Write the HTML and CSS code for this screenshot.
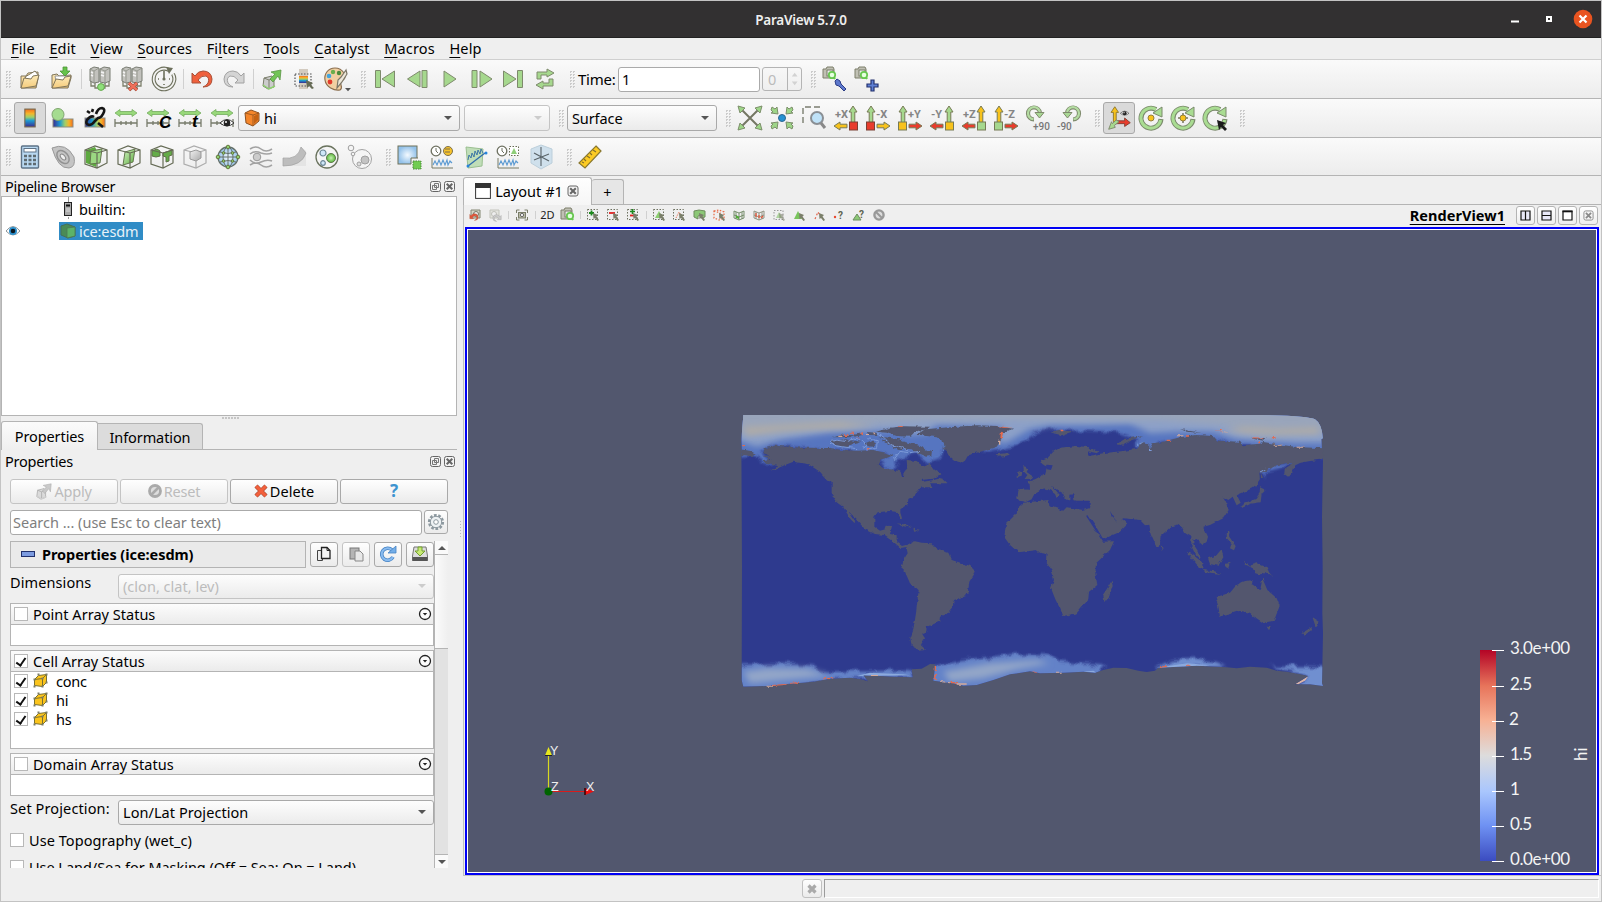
FILE: index.html
```html
<!DOCTYPE html>
<html lang="en">
<head>
<meta charset="utf-8">
<title>ParaView 5.7.0</title>
<link rel="stylesheet" href="styles.css">
</head>
<body>
<svg class="defs" width="0" height="0">
<defs>
<linearGradient id="rainbow" x1="0" y1="0" x2="0" y2="1"><stop offset="0" stop-color="#f26c1c"/><stop offset=".25" stop-color="#f5b52a"/><stop offset=".45" stop-color="#9fd06a"/><stop offset=".65" stop-color="#1c9ad0"/><stop offset="1" stop-color="#3a2a90"/></linearGradient>
<linearGradient id="rainbowH" x1="0" y1="0" x2="1" y2="0"><stop offset="0" stop-color="#3a2a90"/><stop offset=".35" stop-color="#1c9ad0"/><stop offset=".6" stop-color="#9fd06a"/><stop offset=".8" stop-color="#f5b52a"/><stop offset="1" stop-color="#f26c1c"/></linearGradient>
<linearGradient id="folder" x1="0" y1="0" x2="0" y2="1"><stop offset="0" stop-color="#fdeab8"/><stop offset="1" stop-color="#f5cc7c"/></linearGradient>
<linearGradient id="gry" x1="0" y1="0" x2="1" y2="1"><stop offset="0" stop-color="#f2f2f2"/><stop offset="1" stop-color="#a8a8a8"/></linearGradient>
<radialGradient id="sky"><stop offset="0" stop-color="#f4faff"/><stop offset="1" stop-color="#94c2ea"/></radialGradient>
<radialGradient id="grn"><stop offset="0" stop-color="#c4efb0"/><stop offset="1" stop-color="#5cb83c"/></radialGradient>
<linearGradient id="grnL" x1="0" y1="0" x2="1" y2="1"><stop offset="0" stop-color="#d4f4c4"/><stop offset="1" stop-color="#5fae42"/></linearGradient>

<g id="open"><path d="M-9 9V-3h5l2-3 10-1v7L6 9z" fill="url(#folder)" stroke="#80755a"/><path d="M-5-2 5-8l4 5-10 6z" fill="#fff" stroke="#80755a"/><path d="M-9 9-6-1 1 0 3-3 9-4 6 7-6 9z" fill="url(#folder)" stroke="#80755a"/></g>
<g id="openrecent"><path d="M-10 9V-4l5-1 2 2 12-1v3L6 9z" fill="url(#folder)" stroke="#80755a"/><path d="M-7-3H8l-2 5H-6z" fill="#fff" stroke="#999"/><path d="M-10 9-6 0 1 1 3-2 9-3 6 7-7 9z" fill="url(#folder)" stroke="#80755a"/><path d="M1-12h4v4h3L3-3-2-8h3z" fill="#66c24a" stroke="#4d9436" stroke-width=".8"/></g>
<g id="servers"><path d="M-5 4V9H1M5 4V9H0M-9 2V7h4M9 2V7H5" fill="none" stroke="#7d806c" stroke-width="1.3"/><path d="M-10-10l4-2 5 1V3l-5 1-4-2zM0-10l4-2 6 1V2L5 4 0 3z" fill="#c2c2bd" stroke="#797c73"/><path d="M-10-10l4 2 5-3M-6-8V4M0-10l5 2 5-3M5-8V4" fill="none" stroke="#8d9087" stroke-width=".8"/><path d="M-9-7l2 1M-9-4l2 1M1-7l3 1M1-4l3 1" stroke="#f4f4f4" stroke-width="1.4"/></g>
<g id="connect"><use href="#servers"/><circle cx="1" cy="8" r="3.4" fill="#8fe07a" stroke="#63a84c"/></g>
<g id="disconnect"><use href="#servers"/><path d="M-3 4 5 11M5 4-3 11" stroke="#8a4030" stroke-width="3.6"/><path d="M-3 4 5 11M5 4-3 11" stroke="#f0705a" stroke-width="2.4"/></g>
<g id="timer"><path d="M5-9A10.3 10.3 0 1 0 9-5" fill="none" stroke="#6d705c" stroke-width="4"/><path d="M5-9A10.3 10.3 0 1 0 9-5" fill="none" stroke="#f2f2f0" stroke-width="1.8"/><path d="M2-12 9-11 5-5z" fill="#6d705c"/><path d="M0-8V0M-6 0h1M0 6V5M5 0h1" stroke="#6d705c" stroke-width="1.6"/><circle r="1.6" fill="#6d705c"/></g>
<g id="undoarrow"><path d="M-10-6V4H-1L-4 1Q0-4 4-3 8-1 6 4 4 7 1 8 10 8 10 0 9-8 1-8-4-8-7-3z"/></g>
<g id="saveext"><path d="M-8-1 0-3 2 0V8l-6 2-5-3z" fill="#ccc" stroke="#7b7e6b"/><path d="M-8-1l5 2 5-2M-3 1v8" fill="none" stroke="#7b7e6b"/><path d="M-9 6-3 10 3 7" fill="none" stroke="#8ed070" stroke-width="1.5"/><path d="M-2 0 3-5-1-7 9-9 8 1 6-3 1 3z" fill="#72c456" stroke="#5a9444" stroke-width=".8"/></g>
<g id="subset"><rect x="-5" y="-10" width="9" height="20" fill="#d3cbc0"/><rect x="-5" y="-3" width="9" height="7" fill="url(#rainbow)"/><rect x="-9" y="-5" width="16" height="12" fill="none" stroke="#555" stroke-width="1.2" stroke-dasharray="1.5 1.500"/><path d="M2 1 9 4 7 6 10 9 8 10 5 7 3 9z" fill="#666b55"/></g>
<g id="palette"><path d="M-1-11C-8-11-12-5-11 1-10 8-2 12 4 11 8 8 3 6 5 2 9 1 10-2 8-6 6-9 3-11-1-11z" fill="#f2cfa2" stroke="#8b6f50" stroke-width="1.2"/><circle cx="-3" cy="-7" r="2.2" fill="#6aae4c"/><circle cx="3" cy="-6" r="2.2" fill="#4b8a3c"/><circle cx="-7" cy="-3" r="2.3" fill="#44a4dc"/><circle cx="-6" cy="3" r="2.4" fill="#e23a2c"/><path d="M10-9 5-2 2 1 1 9 6 3 11-5z" fill="#ece6d8" stroke="#7c7667" stroke-width="1.2"/><path d="M9 9h6l-3 3.2z" fill="#555"/></g>
<g id="play"><path d="M-6-8 6 0-6 8z"/></g>
<g id="loop" fill="#a6d88e" stroke="#7e8a6c"><path d="M-8 0V-7H2v-3l7 4-7 4v-2H-4v4z"/><path d="M8 0V7H-2v3L-9 6l7-4v2H4V0z"/></g>
<g id="camera"><path d="M-12-10h3l1-2h6l1 2v9h-11z" fill="#c0c0b4" stroke="#7c7e6a"/><rect x="-8" y="-9" width="6" height="6" fill="#eee" stroke="#777a66"/><circle cx="-3" cy="-4" r="3.2" fill="#e6ffe0" stroke="#68c850" stroke-width="1.8"/><path d="M-1-2 0 0" stroke="#68c850" stroke-width="2"/></g>
<g id="camedit"><use href="#camera"/><path d="M0 2l2-2 3 2 1 3 5 5-2 2-5-5-3-1z" fill="#5d78cc" stroke="#2b3c86"/></g>
<g id="camadd"><use href="#camera"/><path d="M4 1h3v4h4v3H7v4H4V8H0V5h4z" fill="#5f80d4" stroke="#23316e" stroke-width="1.2"/></g>

<g id="legend"><rect x="-5.5" y="-9.500" width="11" height="19" fill="url(#rainbow)" stroke="#76684e" stroke-width="1.2"/></g>
<g id="editmap"><rect x="-9" y="1" width="20" height="8" fill="url(#rainbowH)" stroke="#8b8e80"/><circle cx="-4" cy="-3.500" r="6" fill="#a5dc90" stroke="#7fa56e"/></g>
<g id="sepmap"><rect x="-10" y="0" width="20" height="9" fill="url(#rainbowH)" stroke="#8b8e80"/><path d="M-1-1Q-4-3-8 2-10 6-6 7-3 7 0 3M1-4Q3-10 7-10 11-9 8-4 6 0 3 0L-1 4M-8-7l3 2M-2-9l-1 3M3 5l5 4" fill="none" stroke="#151515" stroke-width="2.600"/></g>
<g id="rescale"><path d="M-11-5-6-8.500v2H6v-2L11-5 6-1.500v-2H-6v2z" fill="#98d87a" stroke="#74ac5e" stroke-width=".8"/><path d="M-11 1V9M11 1V9M-11 5H11M-5 3V7M0 3V7M5 3V7" stroke="#777b6b" stroke-width="1.300"/></g>
<g id="eyebw"><path d="M-7 0Q0-7 7 0 0 6-7 0z" fill="#fff" stroke="#333"/><circle r="3.300" fill="#222"/><circle cx="-1" cy="-1" r="1" fill="#fff"/></g>
<g id="resetcam"><path d="M-8-8 8 8M8-8-8 8" stroke="#747763" stroke-width="2"/><g fill="#9ed588" stroke="#7c8f6a"><path d="M-12-12l7 2-5 5zM12-12l-7 2 5 5zM-12 12l7-2-5-5zM12 12l-7-2 5-5z"/></g></g>
<g id="zoomdata"><g fill="#9ed588" stroke="#7c8f6a"><path d="M-4-4l-1-7-2 2-3-2-1 3 2 2-2 1zM4-4l1-7 2 2 3-2 1 3-2 2 2 1zM-4 4l-1 7-2-2-3 2-1-3 2-2-2-1zM4 4l1 7 2-2 3 2 1-3-2-2 2-1z"/></g><circle r="3.500" fill="#2592d4" stroke="#2d6690"/></g>
<g id="zoombox"><path d="M-11 5V-11H8" fill="none" stroke="#7b7e70" stroke-width="1.400" stroke-dasharray="6 3"/><circle cx="3" cy="0" r="6" fill="#bfe2f8" stroke="#8a8f94" stroke-width="2"/><path d="M7 5l4 5" stroke="#888" stroke-width="3"/></g>
<g id="aup"><path d="M-1.800 5V-6h-2.200L0-12l4 6H1.800V5z" stroke="#777a55"/></g>
<g id="aleft"><path d="M-5-1.800h-7V-4l-6 4 6 4V1.800h7z" stroke="#777a55"/></g>
<g id="aright"><path d="M5-1.800h7V-4l6 4-6 4V1.800H5z" stroke="#777a55"/></g>
<g id="rot"><path d="M0 3.500A6 6 0 1 1 6-3" fill="none" stroke="#7e8a6c" stroke-width="4.200"/><path d="M-.5 3.200A6 6 0 1 1 6-3" fill="none" stroke="#b4dca2" stroke-width="2.200"/><path d="M1-3.500H10L5.500 2z" fill="#a9d895" stroke="#7e8a6c"/></g>
<g id="ring"><path d="M10 1A10 10 0 1 1 5-8.500" fill="none" stroke="#7b8a6c" stroke-width="5"/><path d="M9.700 2A10 10 0 1 1 5-8.500" fill="none" stroke="#a9dc92" stroke-width="3"/><path d="M2-5 11-11 11-1z" fill="#a9dc92" stroke="#7b8a6c"/></g>
<g id="axes"><g fill="#f7c21c" stroke="#8c7630"><path d="M-6 4V-6h-2.500l4-6 4 6H-3V4z"/></g><path d="M-3 3H6V0l6 5-6 4V6h-9z" fill="#e83c2c" stroke="#854034"/><path d="M-3 2-7 6-8 4-11 12-4 10-5 8 0 4z" fill="#a6d88e" stroke="#7e8a6c"/></g>

<g id="calc"><rect x="-8.500" y="-11" width="17" height="22" rx="1" fill="#b9d9f2" stroke="#5e7387" stroke-width="1.400"/><rect x="-6" y="-8.500" width="12" height="3.500" fill="#fff" stroke="#5e7387"/><path d="M-6-1h3M-1.500-1h3M3-1h3M-6 3h3M-1.500 3h3M3 3h3M-6 7h3M-1.500 7h3M3 7h3" stroke="#5e6a70" stroke-width="2.500"/></g>
<g id="contour"><path d="M-11-9Q3-15 11 0 13 10 6 11-5 12-11-9z" fill="#c4c4c4" stroke="#999"/><ellipse rx="5" ry="7.500" transform="rotate(-40)" fill="none" stroke="#929292" stroke-width="1.500"/><ellipse rx="2" ry="3.500" transform="rotate(-40)" fill="#eee" stroke="#858585"/></g>
<g id="wire"><path d="M-11-7-1-11 11-7V6L1 11-11 7zM-11-7 1-4 11-7M1-4V11" fill="none" stroke-width="1.200"/></g>
<g id="clip"><path d="M-10-7-1-10 2-4 0 10-10 6z" fill="#5eaa40"/><path d="M-5-6 6-8 4 6-6 7z" fill="#9bd882" stroke="#64784e"/><use href="#wire" stroke="#656b55"/></g>
<g id="slice"><path d="M-4-5 6-8 4 5-6 8z" fill="url(#grnL)" stroke="#64784e"/><use href="#wire" stroke="#656b55"/></g>
<g id="thresh"><path d="M-10-6l5-2 3 2V-1l-4 1-4-1zM1-4l9-3v5l-3 1v5L4 5V0L1-1z" fill="#64ac48" stroke="#5e7048"/><use href="#wire" stroke="#656b55"/></g>
<g id="extract"><use href="#wire" stroke="#acacac"/><path d="M-5-5l6-2 5 2V1L1 4-5 2z" fill="url(#gry)" stroke="#999"/></g>
<g id="glyph"><circle r="10" fill="url(#sky)" stroke="#64706a" stroke-width="1.300"/><path d="M-10 0H10M0-10V10M-8-5Q0-2 8-5M-8 5Q0 2 8 5" stroke="#64706a" fill="none"/><ellipse rx="5" ry="10" fill="none" stroke="#64706a"/><g fill="#8ed070" stroke="#64783e"><circle cx="-10" r="1.800"/><circle cx="10" r="1.800"/><circle cy="-10" r="1.800"/><circle cy="10" r="1.800"/><circle cx="-4.500" cy="-4" r="1.300"/><circle cx="4.500" cy="-4" r="1.300"/><circle cx="-4.500" cy="4" r="1.300"/><circle cx="4.500" cy="4" r="1.300"/></g></g>
<g id="stream"><path d="M-11-8Q-5-12 0-8T11-8M-11-3Q-6-7 0-4 6-2 11-4M-11 3Q-6 8 0 5 6 2 11 4M-11 8Q-5 4 0 8T11 8" fill="none" stroke="#a3a3a3" stroke-width="1.600"/><circle cx="-4" r="3.800" fill="#ccc" stroke="#9a9a9a"/></g>
<g id="warp"><path d="M-11 1Q4 3 7-10L12-6V9H-11z" fill="#e4e4e4"/><path d="M-11 1Q4 3 7-10L12-4Q8 9-11 9z" fill="#bdbdbd" stroke="#a0a0a0" stroke-width=".7"/></g>
<g id="group"><circle r="11" fill="#f5f5f5" stroke="#6a735e" stroke-width="1.300"/><circle cx="4" cy="1" r="4.500" fill="url(#grn)" stroke="#5e784c"/><circle cx="-4" cy="-4" r="3" fill="#cfe7f8" stroke="#6c8797" stroke-width="1.200"/><circle cx="-4" cy="6" r="2.300" fill="#cfe7f8" stroke="#6c8797" stroke-width="1.200"/></g>
<g id="level"><circle cx="2" cy="2" r="9.500" fill="#f5f5f5" stroke="#a3a3a3"/><circle cx="5" cy="3" r="4" fill="#c4c4c4" stroke="#a0a0a0"/><circle cx="-1" cy="7" r="2" fill="#ddd" stroke="#a0a0a0"/><circle cx="-9" cy="-9" r="2.800" fill="#f4f4f4" stroke="#a0a0a0"/><circle cx="-7" cy="-3" r="1.800" fill="#f4f4f4" stroke="#a0a0a0"/></g>
<g id="selection"><rect x="-11" y="-11" width="19" height="18" fill="url(#sky)" stroke="#6e7058"/><rect x="2" y="1" width="11" height="11" fill="#f2f2f2"/><path d="M2 7V1h7" fill="none" stroke="#6e7058"/><rect x="4" y="4" width="8" height="8" fill="#72cc52" stroke="#4b883a" stroke-dasharray="1.500 1"/></g>
<g id="wave"><path d="M-10 1V11H11" fill="none" stroke="#777a66"/><path d="M-9 8l2-4 2 4 2-5 2 5 2-5 2 5 2-5 1 5 2-4 2 2" fill="none" stroke="#5b9ad2" stroke-width="1.100"/></g>
<g id="clock"><circle cx="-6" cy="-6" r="4.800" fill="#fff" stroke="#6d7060" stroke-width="1.300"/><path d="M-6-9v3l2 2" stroke="#6d7060" fill="none"/></g>
<g id="plottime"><use href="#wave"/><use href="#clock"/><circle cx="6" cy="-6" r="4.500" fill="#f8c32a" stroke="#7d714e"/><path d="M3-8h5M3-5h5" stroke="#7d714e"/></g>
<g id="plotline"><path d="M-9-10 8-8 7 9l-14 2z" fill="#c0deb8" stroke="#9abf90"/><path d="M-7 9 10-4" stroke="#2f6cac" stroke-width="1.300"/><path d="M-7 3l1-5 2 3 1-5 2 4 1-6 2 4 1-5 2 4 1-5 2 4" fill="none" stroke="#3e77a6"/><circle cx="-7" cy="9" r="1.500" fill="#2684dc"/><circle cx="11" cy="-4" r="1.500" fill="#2684dc"/></g>
<g id="plotsel"><use href="#wave"/><use href="#clock"/><rect x="1.500" y="-10.500" width="9" height="9" fill="#fff" stroke="#686b55" stroke-dasharray="1.500 1.500"/><path d="M3-3 6-9 9-3z" fill="#8fce78"/></g>
<g id="probe"><path d="M-10-8 0-12 11-8V6L0 12-10 6z" fill="#cfe0ec" stroke="#bccfdb"/><path d="M0-10V9M-7-4 8 4M8-3-7 3" stroke="#596368" stroke-width="1.100"/></g>
<g id="ruler"><path d="M6-11l5 5L-5 11l-6-5z" fill="#fccb24" stroke="#8a782f" stroke-width="1.200"/><path d="M3-7l3 2M0-4l2 2M-3-1l3 2M-6 2l2 2M-8 5l2 1" stroke="#84702a" stroke-width="1.100"/></g>

<g id="vcube"><path d="M-6-1-2-5 6-6V2L2 6-6 5z" fill="#fbc41c" stroke="#7b702e"/><path d="M-6-1 2-2 6-6M2-2V6" fill="none" stroke="#7b702e"/><path d="M-7-2h2v2h-2zM-3-7h2v2h-2zM5-7h2v2H5zM1-3h2v2H1zM-7 5h2v2h-2zM1 5h2v2H1zM5 1h2v2H5z" fill="#7b7d66"/></g>
<g id="float"><rect x="-5" y="-5" width="10" height="10" rx="2" fill="#f3f3f3" stroke="#666"/><path d="M-1-3h4v4h-4zM-3-1h4v4h-4z" fill="#eee" stroke="#777"/></g>
<g id="xbox"><rect x="-5" y="-5" width="10" height="10" rx="2" fill="#f3f3f3" stroke="#666"/><path d="M-2.800-2.800 2.800 2.800M2.800-2.800-2.800 2.800" stroke="#666" stroke-width="2"/></g>
<g id="drop"><circle r="5.500" fill="#fcfcfc" stroke="#222" stroke-width="1.300"/><path d="M-2.200-1h4.400L0 1.600z" fill="#222"/></g>
<g id="ptr"><path d="M0-2 5 0 3.500 1.500 6 5 4.500 6 2 3 .500 4z" fill="#7b7f6a"/></g>
<g id="dots"><rect x="-5.500" y="-5.500" width="10" height="10" fill="none" stroke="#6c705f" stroke-dasharray="1.500 1.500"/></g>
<g id="minicam"><path d="M-4-5h9V3H-4z" fill="#d4d5c8" stroke="#828571"/><circle cx="1" cy="-1" r="2.500" fill="#eee" stroke="#777a66"/></g>
<g id="mesh"><path d="M-5-4 0-2 5-4V3L0 5-5 3zM-5 0l5 2 5-2M0-2v7M-3-3v7M3-3v7" fill="none" stroke-width=".9"/></g>
</defs>
</svg>

<div class="window">
<header class="titlebar"><span></span><span class="title">ParaView 5.7.0</span>
<svg class="wm" viewBox="0 0 90 36"><path d="M0 20.500h8" stroke="#fff" stroke-width="2"/><rect x="36" y="16" width="4" height="4" fill="none" stroke="#fff" stroke-width="2"/><circle cx="72" cy="18" r="9.300" fill="#e95420"/><path d="M68.500 14.500l7 7m0-7l-7 7" stroke="#fff" stroke-width="2.200"/></svg></header>
<nav class="menubar"><span><u>F</u>ile</span><span><u>E</u>dit</span><span><u>V</u>iew</span><span><u>S</u>ources</span><span>Fi<u>l</u>ters</span><span><u>T</u>ools</span><span><u>C</u>atalyst</span><span><u>M</u>acros</span><span><u>H</u>elp</span></nav>

<div class="toolbar t1">
<i class="handle first"></i>
<svg class="i" viewBox="-16 -16 32 32"><use href="#open"/></svg>
<svg class="i" viewBox="-16 -16 32 32"><use href="#openrecent"/></svg><i class="sep"></i>
<svg class="i" viewBox="-16 -16 32 32"><use href="#connect"/></svg>
<svg class="i" viewBox="-16 -16 32 32"><use href="#disconnect"/></svg>
<svg class="i" viewBox="-16 -16 32 32"><use href="#timer"/></svg><i class="sep"></i>
<svg class="i" viewBox="-16 -16 32 32"><use href="#undoarrow" fill="#f0603c" stroke="#a85038"/></svg>
<svg class="i" viewBox="-16 -16 32 32"><use href="#undoarrow" transform="scale(-1 1)" fill="#d4d4d4" stroke="#a2a2a2"/></svg><i class="sep"></i>
<svg class="i" viewBox="-16 -16 32 32"><use href="#saveext"/></svg>
<svg class="i" viewBox="-16 -16 32 32"><use href="#subset"/></svg>
<svg class="i" viewBox="-16 -16 32 32"><use href="#palette"/></svg>
<i class="handle"></i>
<svg class="i" viewBox="-16 -16 32 32"><g fill="#a6d88e" stroke="#7e8a6c"><path d="M-9.500-8.500h5v17h-5zM9.500-8-3 0 9.500 8z"/></g></svg>
<svg class="i" viewBox="-16 -16 32 32"><g fill="#a6d88e" stroke="#7e8a6c"><path d="M5-8.500h5v17H5zM3-8-9.500 0 3 8z"/></g></svg>
<svg class="i" viewBox="-17 -16 32 32"><use href="#play" fill="#a6d88e" stroke="#7e8a6c"/></svg>
<svg class="i" viewBox="-17 -16 32 32"><g fill="#a6d88e" stroke="#7e8a6c"><path d="M-10-8.500h5v17h-5zM-2-8 10 0-2 8z"/></g></svg>
<svg class="i" viewBox="-16 -16 32 32"><g fill="#a6d88e" stroke="#7e8a6c"><path d="M4.500-8.500h5v17h-5zM-9.500-8 3 0-9.500 8z"/></g></svg>
<svg class="i" viewBox="-16 -16 32 32"><use href="#loop"/></svg>
<i class="handle"></i>
<span class="timelabel">Time:</span><div class="field time">1</div><div class="spin"><span>0</span><svg viewBox="0 0 14 23"><path d="M4 9l3-4 3 4zM4 14l3 4 3-4z" fill="#d2d2d2"/></svg></div>
<i class="handle"></i>
<svg class="i" viewBox="-16 -16 32 32"><use href="#camedit"/></svg>
<svg class="i" viewBox="-16 -16 32 32"><use href="#camadd"/></svg>
</div>

<div class="toolbar t2">
<i class="handle first"></i>
<svg class="i on" viewBox="-16 -16 32 32"><use href="#legend"/></svg>
<svg class="i" viewBox="-16 -16 32 32"><use href="#editmap"/></svg>
<svg class="i" viewBox="-17 -16 32 32"><use href="#sepmap"/></svg>
<svg class="i" viewBox="-16 -16 32 32"><use href="#rescale"/></svg>
<svg class="i" viewBox="-16 -16 32 32"><use href="#rescale"/><text class="mark" x="1" y="10">C</text></svg>
<svg class="i" viewBox="-16 -16 32 32"><use href="#rescale"/><text class="mark" x="2" y="9">t</text></svg>
<svg class="i" viewBox="-16 -16 32 32"><use href="#rescale"/><use href="#eyebw" x="5" y="5"/></svg>
<div class="combo c1"><svg width="16" height="18" viewBox="0 0 16 18"><path d="M1 4 7 1l8 3v8l-6 5-7-3z" fill="#f5862a" stroke="#8b5020"/><path d="M1 4l8 2 6-2M9 6v11" fill="none" stroke="#a35c20"/><path d="M10 7l4-2v6l-4 4z" fill="#c56212"/></svg><span>hi</span><b class="arr"></b></div>
<div class="combo c2 dis"><b class="arr"></b></div>
<i class="handle"></i>
<div class="combo c3"><span>Surface</span><b class="arr"></b></div>
<i class="handle"></i>
<svg class="i" viewBox="-16 -16 32 32"><use href="#resetcam"/></svg>
<svg class="i" viewBox="-16 -16 32 32"><use href="#zoomdata"/></svg>
<svg class="i" viewBox="-16 -16 32 32"><use href="#zoombox"/></svg>
<svg class="i" viewBox="-16 -16 32 32"><use href="#aup" x="7" fill="#a6d88e"/><use href="#aleft" x="6" y="8" fill="#f7c21c"/><rect x="3.500" y="4" width="8" height="8" fill="#e83c2c" stroke="#7a4034"/><text class="ax" x="-11" y="0">+X</text></svg>
<svg class="i" viewBox="-16 -16 32 32"><use href="#aup" x="-7" fill="#a6d88e"/><use href="#aright" x="-6" y="8" fill="#f7c21c"/><rect x="-11.500" y="4" width="8" height="8" fill="#e83c2c" stroke="#7a4034"/><text class="ax" x="-2" y="0">-X</text></svg>
<svg class="i" viewBox="-16 -16 32 32"><use href="#aup" x="-7" fill="#a6d88e"/><use href="#aright" x="-6" y="8" fill="#e83c2c"/><rect x="-11.500" y="4" width="8" height="8" fill="#f7c21c" stroke="#777a55"/><text class="ax" x="-2" y="0">+Y</text></svg>
<svg class="i" viewBox="-16 -16 32 32"><use href="#aup" x="7" fill="#a6d88e"/><use href="#aleft" x="6" y="8" fill="#e83c2c"/><rect x="3.500" y="4" width="8" height="8" fill="#f7c21c" stroke="#777a55"/><text class="ax" x="-11" y="0">-Y</text></svg>
<svg class="i" viewBox="-16 -16 32 32"><use href="#aup" x="7" fill="#f7c21c"/><use href="#aleft" x="6" y="8" fill="#e83c2c"/><rect x="3.500" y="4" width="8" height="8" fill="#a6d88e" stroke="#777a55"/><text class="ax" x="-11" y="0">+Z</text></svg>
<svg class="i" viewBox="-16 -16 32 32"><use href="#aup" x="-7" fill="#f7c21c"/><use href="#aright" x="-6" y="8" fill="#e83c2c"/><rect x="-11.500" y="4" width="8" height="8" fill="#a6d88e" stroke="#777a55"/><text class="ax" x="-2" y="0">-Z</text></svg>
<svg class="i" viewBox="-16 -16 32 32"><use href="#rot" x="-4" y="-2"/><text class="deg" x="-5" y="12">+90</text></svg>
<svg class="i" viewBox="-16 -16 32 32"><use href="#rot" transform="translate(3 -2) scale(-1 1)"/><text class="deg" x="-13" y="12">-90</text></svg>
<i class="handle"></i>
<svg class="i on" viewBox="-16 -16 32 32"><use href="#axes"/><use href="#eyebw" transform="translate(6 -5) scale(.65)"/></svg>
<svg class="i" viewBox="-16 -16 32 32"><use href="#ring"/><circle r="3" fill="#f8c21c" stroke="#93803c"/></svg>
<svg class="i" viewBox="-16 -16 32 32"><use href="#ring"/><path d="M-5 0H5M0-5V5" stroke="#747763" stroke-width="1.500"/><circle r="3" fill="#f8c21c" stroke="#93803c"/></svg>
<svg class="i" viewBox="-16 -16 32 32"><use href="#ring"/><path d="M2 2l9 3-3 2 4 4-2 2-4-4-2 3z" fill="#1b1b1b"/></svg>
<i class="handle"></i>
</div>

<div class="toolbar t3">
<i class="handle first"></i>
<svg class="i w" viewBox="-16 -16 33 32"><use href="#calc"/></svg>
<svg class="i w" viewBox="-16 -16 33 32"><use href="#contour"/></svg>
<svg class="i w" viewBox="-16 -16 33 32"><use href="#clip"/></svg>
<svg class="i w" viewBox="-16 -16 33 32"><use href="#slice"/></svg>
<svg class="i w" viewBox="-16 -16 33 32"><use href="#thresh"/></svg>
<svg class="i w" viewBox="-16 -16 33 32"><use href="#extract"/></svg>
<svg class="i w" viewBox="-16 -16 33 32"><use href="#glyph"/></svg>
<svg class="i w" viewBox="-16 -16 33 32"><use href="#stream"/></svg>
<svg class="i w" viewBox="-16 -16 33 32"><use href="#warp"/></svg>
<svg class="i w" viewBox="-16 -16 33 32"><use href="#group"/></svg>
<svg class="i w" viewBox="-16 -16 33 32"><use href="#level"/></svg>
<i class="handle h3"></i>
<svg class="i w" viewBox="-16 -16 33 32"><use href="#selection"/></svg>
<svg class="i w" viewBox="-16 -16 33 32"><use href="#plottime"/></svg>
<svg class="i w" viewBox="-16 -16 33 32"><use href="#plotline"/></svg>
<svg class="i w" viewBox="-16 -16 33 32"><use href="#plotsel"/></svg>
<svg class="i w" viewBox="-16 -16 33 32"><use href="#probe"/></svg>
<i class="handle h3"></i>
<svg class="i w" viewBox="-16 -16 33 32"><use href="#ruler"/></svg>
</div>

<main class="main">
<aside class="left">
<div class="dock"><span>Pipeline Browser</span><svg width="26" height="14" viewBox="0 0 26 14"><use href="#float" x="6.500" y="7.500"/><use href="#xbox" x="20.500" y="7.500"/></svg></div>
<div class="tree">
<div class="trow"><svg class="teye" viewBox="0 0 16 12"></svg><div class="node"><svg width="16" height="22" viewBox="0 0 16 22"><path d="M8.500 0v5" stroke="#999"/><rect x="4.500" y="5.500" width="7" height="13" fill="#aaa" stroke="#222"/><path d="M6 8.500h4" stroke="#111" stroke-width="2"/><path d="M6 12h4M6 14h4" stroke="#ddd"/><path d="M8.500 20v2" stroke="#999"/></svg><span>builtin:</span></div></div>
<div class="trow"><svg class="teye" viewBox="0 0 16 12"><path d="M1 6Q8-3 15 6 8 14 1 6z" fill="#fff" stroke="#8c9599"/><circle cx="8" cy="6" r="4" fill="#2c8fcc"/><circle cx="8" cy="6" r="2.300" fill="#0b1720"/></svg><div class="node sel"><svg width="16" height="16" viewBox="0 0 16 16"><path d="M1 3 7 1l8 3v9l-7 2-7-3z" fill="#4a8b56" stroke="#46705a"/><path d="M7 5l8-1v9l-8 2z" fill="#5cb368" stroke="#4c7a54" stroke-width=".8"/></svg><span>ice:esdm</span></div></div>
</div>
<div class="hsplit"></div>
<div class="tabs"><div class="tab act">Properties</div><div class="tab">Information</div></div>
<div class="dock d2"><span>Properties</span><svg width="26" height="14" viewBox="0 0 26 14"><use href="#float" x="6.500" y="7.500"/><use href="#xbox" x="20.500" y="7.500"/></svg></div>
<div class="btns">
<div class="btn dis"><svg width="16" height="18" viewBox="-10 -10 20 20" class="gray"><use href="#saveext"/></svg>Apply</div>
<div class="btn dis"><svg width="14" height="14" viewBox="1 1 14 14"><circle cx="8" cy="8" r="5.500" fill="#ddd" stroke="#aaa" stroke-width="2.800"/><path d="M12 4l-8 8" stroke="#aaa" stroke-width="2.500"/></svg>Reset</div>
<div class="btn del"><svg width="14" height="14" viewBox="0 0 14 14"><path d="M2 2l10 10M12 2L2 12" stroke="#a84a34" stroke-width="4.400"/><path d="M2.200 2.200l9.600 9.600M11.800 2.200l-9.600 9.600" stroke="#f2603c" stroke-width="3.200"/></svg>Delete</div>
<div class="btn help">?</div>
</div>
<div class="search"><div class="field">Search ... (use Esc to clear text)</div><div class="btn gear"><svg width="18" height="18" viewBox="-9 -9 18 18"><circle r="6.700" fill="none" stroke="#8c989f" stroke-width="2.800" stroke-dasharray="2.600 1.600"/><circle r="5.700" fill="#eef2f4" stroke="#8c989f"/><circle r="2.300" fill="#fff" stroke="#8c989f"/></svg></div></div>
<div class="scroll">
<div class="props">
<div class="ghead"><div class="gtitle"><i class="minus"></i>Properties (ice:esdm)</div>
<div class="btn sq"><svg width="18" height="18" viewBox="0 0 18 18"><path d="M2.500 5.500h5v10h-5z" fill="#eee" stroke="#444"/><path d="M6.500 2.500H12l3 3v8H6.500z" fill="#f2f2f2" stroke="#222" stroke-width="1.300"/><path d="M12 2.500v3h3" fill="none" stroke="#222"/></svg></div>
<div class="btn sq off"><svg width="18" height="18" viewBox="0 0 18 18"><rect x="3" y="3" width="9" height="11" fill="#b5b5b5" stroke="#777"/><path d="M8 6h5l3 3v7H8z" fill="#e8e8e8" stroke="#888"/></svg></div>
<div class="btn sq"><svg width="18" height="18" viewBox="0 0 18 18"><path d="M14 12A6 6 0 1 1 13 5" fill="none" stroke="#4583c4" stroke-width="3.600"/><path d="M14 12A6 6 0 1 1 13 5" fill="none" stroke="#8abcf0" stroke-width="2"/><path d="M9 8h8V1z" fill="#74aee8" stroke="#4583c4" stroke-width=".8"/></svg></div>
<div class="btn sq"><svg width="18" height="18" viewBox="0 0 18 18"><path d="M1.500 11 3 2h12l1.500 9v4.500h-15z" fill="#ddd" stroke="#777"/><rect x="1.500" y="12" width="15" height="4" fill="#555"/><path d="M7 2h4v4h3l-5 5-5-5h3z" fill="#c8ea74" stroke="#72a030"/></svg></div></div>
<div class="row dim"><span class="lab">Dimensions</span><div class="combo dis"><span>(clon, clat, lev)</span><b class="arr"></b></div></div>
<section class="box"><div class="bh"><i class="cb"></i><span>Point Array Status</span><svg width="14" height="14" viewBox="-7 -7 14 14"><use href="#drop"/></svg></div><div class="bb"></div></section>
<section class="box cell"><div class="bh"><i class="cb ck"></i><span>Cell Array Status</span><svg width="14" height="14" viewBox="-7 -7 14 14"><use href="#drop"/></svg></div><div class="bb">
<div class="item"><i class="cb ck"></i><svg width="15" height="15" viewBox="-7.500 -7.500 15 15"><use href="#vcube"/></svg><span>conc</span></div>
<div class="item"><i class="cb ck"></i><svg width="15" height="15" viewBox="-7.500 -7.500 15 15"><use href="#vcube"/></svg><span>hi</span></div>
<div class="item"><i class="cb ck"></i><svg width="15" height="15" viewBox="-7.500 -7.500 15 15"><use href="#vcube"/></svg><span>hs</span></div></div></section>
<section class="box"><div class="bh"><i class="cb"></i><span>Domain Array Status</span><svg width="14" height="14" viewBox="-7 -7 14 14"><use href="#drop"/></svg></div><div class="bb"></div></section>
<div class="row proj"><span class="lab">Set Projection:</span><div class="combo"><span>Lon/Lat Projection</span><b class="arr"></b></div></div>
<div class="check"><i class="cb"></i><span>Use Topography (wet_c)</span></div>
<div class="check"><i class="cb"></i><span>Use Land/Sea for Masking (Off = Sea; On = Land)</span></div>
</div>
<div class="sbar"><div class="sb"><b class="arr up"></b></div><div class="thumb"></div><div class="trough"></div><div class="sb"><b class="arr"></b></div></div>
</div>
</aside>
<div class="vsplit"><i></i></div>
<section class="right">
<div class="ltabs"><div class="ltab act"><svg width="16" height="16" viewBox="0 0 16 16"><rect x=".600" y=".600" width="14.800" height="14.800" fill="#fff" stroke="#333"/><rect width="16" height="5" fill="#333"/></svg><span>Layout #1</span><svg width="12" height="12" viewBox="-6 -6 12 12"><use href="#xbox"/></svg></div><div class="ltab plus">+</div></div>
<div class="frame">
<div class="vbar">
<svg class="s" viewBox="-10 -10 20 20"><use href="#minicam"/><use href="#undoarrow" transform="translate(-1 2) scale(.42)" fill="#e2543a" stroke="#b0583c"/></svg>
<svg class="s" viewBox="-10 -10 20 20"><g opacity=".4"><use href="#minicam" transform="scale(-1 1)"/></g><use href="#undoarrow" transform="translate(2 3) scale(-.42 .42)" fill="#ccc" stroke="#a0a0a0"/></svg><i class="vs"></i>
<svg class="s" viewBox="-10 -10 20 20"><path d="M-5.500-2v-3h3M5.500-2v-3h-3M-5.500 2v3h3M5.500 2v3h-3" fill="none" stroke="#7b7e6a"/><rect x="-3.500" y="-2.500" width="7" height="5.500" fill="#b9bba7" stroke="#7b7e6a"/><circle r="1.600" fill="#fff" stroke="#666"/></svg><i class="vs"></i>
<span class="twod">2D</span>
<svg class="s" viewBox="-10 -10 20 20"><use href="#camera" transform="translate(6 5)"/></svg><i class="vs v3"></i>
<svg class="s" viewBox="-10 -10 20 20"><use href="#dots"/><path d="M-4-2h5M-1.500-4.500v5" stroke="#1d8a1d" stroke-width="1.800"/><use href="#ptr"/></svg>
<svg class="s" viewBox="-10 -10 20 20"><use href="#dots"/><path d="M-4-2h6" stroke="#e02020" stroke-width="1.800"/><use href="#ptr"/></svg>
<svg class="s" viewBox="-10 -10 20 20"><use href="#dots"/><path d="M-3-3.500h5M-.500-6v5" stroke="#1d8a1d" stroke-width="1.600"/><path d="M-3 .500h5" stroke="#e02020" stroke-width="1.800"/><use href="#ptr"/></svg><i class="vs v4"></i>
<svg class="s" viewBox="-10 -10 20 20"><use href="#dots"/><path d="M-4 3 0-4 4 3z" fill="#8ccf70"/><use href="#ptr"/></svg>
<svg class="s" viewBox="-10 -10 20 20"><use href="#dots"/><path d="M-3 3 0-3 3 2" fill="none" stroke="#e88064" stroke-dasharray="1.500 1"/><use href="#ptr"/></svg>
<svg class="s" viewBox="-10 -10 20 20"><path d="M-5-4l5-1 6 1V2L2 3V0l-3 1v3l-4-2z" fill="#8cc876" stroke="#6f8d5c"/><use href="#ptr"/></svg>
<svg class="s" viewBox="-10 -10 20 20"><path d="M-5-4 0-5 5-3V3L0 5-5 3zM-5-4 1-2V4" fill="none" stroke="#e8714e" stroke-dasharray="1.500 1.500" stroke-width="1.300"/><use href="#ptr"/></svg>
<svg class="s" viewBox="-10 -10 20 20"><use href="#mesh" stroke="#6c8460"/><path d="M-3 0l3 2v2l-3-1z" fill="#50ac38"/></svg>
<svg class="s" viewBox="-10 -10 20 20"><use href="#mesh" stroke="#888b78"/><path d="M-3-2v4M0 0v3M2 3l2-2" stroke="#e8583e" stroke-width="1.300"/></svg>
<svg class="s" viewBox="-10 -10 20 20"><rect x="-5" y="-4.500" width="9" height="9" fill="none" stroke="#999" stroke-dasharray="1.500 1.500"/><path d="M-3 3 0-3 3 3z" fill="#aed39f"/><use href="#ptr" opacity=".6"/></svg>
<svg class="s" viewBox="-10 -10 20 20"><path d="M-5 4-1-4 3 4z" fill="#79c45c"/><use href="#ptr"/></svg>
<svg class="s" viewBox="-10 -10 20 20"><path d="M-4 4-1-3 3 4" fill="none" stroke="#e0664e" stroke-dasharray="2 2" stroke-width="1.200"/><use href="#ptr"/></svg>
<svg class="s" viewBox="-10 -10 20 20"><circle cx="-4" cy="2" r="1.200" fill="#e8482e"/><text x="-1" y="4" class="q">?</text></svg>
<svg class="s" viewBox="-10 -10 20 20"><path d="M-6 5-2-1 2 5z" fill="#8cc976" stroke="#6e8c60"/><text x="0" y="3" class="q">?</text></svg>
<svg class="s" viewBox="-10 -10 20 20"><circle r="4.600" fill="#ddd" stroke="#999" stroke-width="2.400"/><path d="M-3.500-3.500l7 7" stroke="#999" stroke-width="2"/></svg>
<span class="rv">RenderView1</span>
<div class="vb"><svg width="11" height="11" viewBox="0 0 11 11"><path d="M1 1h9v9H1zM5.500 1v9" fill="#e8e8f8" stroke="#111" stroke-width="1.200"/></svg></div>
<div class="vb"><svg width="11" height="11" viewBox="0 0 11 11"><path d="M1 1h9v9H1zM1 5.500h9" fill="#e8e8f8" stroke="#111" stroke-width="1.200"/></svg></div>
<div class="vb"><svg width="11" height="11" viewBox="0 0 11 11"><path d="M1 1h9v9H1z" fill="#fff" stroke="#111" stroke-width="1.200"/><path d="M.500 1.500h10" stroke="#111" stroke-width="1.600"/></svg></div>
<div class="vb"><svg width="11" height="11" viewBox="-6 -6 12 12" opacity=".75"><use href="#xbox"/></svg></div>
</div>
<div class="canvas">
<svg class="scene" viewBox="468 230 1128 642">
<defs>
<clipPath id="ocean"><path id="oceanp" d="M40 45H1590Q1735 47 1755 58 1775 70 1779 115L1774 118 1776 145 1779 180 1776 350 1778 500 1777 640 1779 700 1776 850 1779 858 1740 853 1695 853 1735 828 1712 823 1670 815 1640 812 1610 803 1560 800 1520 805 1490 802 1400 797 1330 801 1285 803 1275 812 1250 816 1225 812 1190 804 1150 803 1120 810 1095 818 1060 815 1000 818 930 820 900 814 840 823 790 840 740 855 700 857 670 850 610 842 616 793 600 792 575 806 545 808 548 832 500 830 400 826 414 844 390 837 360 833 300 836 250 845 180 851 110 858 40 860 35 840 36 500 34 120z"/></clipPath>
<filter id="b8" x="-20%" y="-50%" width="140%" height="200%"><feGaussianBlur stdDeviation="9"/></filter>
<filter id="b4" x="-20%" y="-50%" width="140%" height="200%"><feTurbulence type="fractalNoise" baseFrequency=".03" numOctaves="2" seed="4" result="n"/><feGaussianBlur in="SourceGraphic" stdDeviation="4"/><feDisplacementMap in2="n" scale="26" xChannelSelector="R" yChannelSelector="G"/></filter>
<filter id="coast" x="-5%" y="-5%" width="110%" height="110%"><feTurbulence type="fractalNoise" baseFrequency=".07" numOctaves="2" seed="7" result="n"/><feDisplacementMap in="SourceGraphic" in2="n" scale="11" xChannelSelector="R" yChannelSelector="G"/></filter>
<linearGradient id="cw" x1="0" y1="0" x2="0" y2="1"><stop offset="0" stop-color="#b40426"/><stop offset=".17" stop-color="#e7745b"/><stop offset=".33" stop-color="#f7b093"/><stop offset=".5" stop-color="#dddcdc"/><stop offset=".67" stop-color="#a9c6fd"/><stop offset=".83" stop-color="#6f92f3"/><stop offset="1" stop-color="#3b4cc0"/></linearGradient>
</defs>
<g transform="translate(730 400) scale(.33333)">
<use href="#oceanp" fill="#2e3a8e"/>
<g clip-path="url(#ocean)">
<g filter="url(#b4)" fill="#5675c0"><path d="M0 0H1800V170H1770L1640 140 1500 135 1440 110 1300 125 1270 155 1215 142 1225 118 1170 98 1080 92 980 88 920 95 880 122 850 138 770 155 700 120 645 140 630 175 600 185 560 160 525 170 490 180 500 205 460 205 448 182 480 160 290 150 130 135 95 160 130 192 105 190 70 165 0 172z"/><path d="M1568 215L1600 195 1660 190 1700 180 1705 185 1640 207 1605 215 1603 230 1590 215z"/></g>
<path d="M0 0H1800V130H1700L1640 125 1520 118 1450 95 1340 95 1260 100 1200 72 1080 76 960 76 900 88 830 128 800 130 820 80 620 75 590 100 530 105 520 90 300 98 210 112 150 120 80 140 20 120z" fill="#8ca0c8" filter="url(#b8)"/>
<path d="M0 0H1800V100L1600 112 1480 76 1300 62 900 60 600 62 430 72 260 82 130 104 20 100z" fill="#99a5bb" filter="url(#b8)"/>
<g fill="#aeaba8" filter="url(#b8)"><path d="M40 80 200 72 330 65 440 78 330 86 150 93 50 108z"/><path d="M1480 92 1540 80 1640 86 1760 82 1770 102 1640 103 1540 99z"/></g>
<g filter="url(#b4)" fill="#6482c8"><path d="M0 795 160 793 245 797 268 815 420 815 540 810 548 835 410 835 300 840 110 880 0 880z"/><path d="M600 797 700 780 780 772 860 762 960 765 985 785 1060 793 1130 797 1100 830 930 835 740 870 600 860z"/></g>
<g filter="url(#b4)" fill="#6f8fd0"><path d="M1278 804 1330 780 1400 778 1460 787 1490 800z"/><path d="M1620 799 1800 801 1800 880 1690 870 1735 826z"/></g>
<g filter="url(#b8)" fill="#93a6c8"><path d="M40 815 110 805 230 806 300 828 160 840 60 850z"/><path d="M640 815 780 790 920 780 960 790 860 808 760 835 660 845z"/></g>
<g fill="#8caadd"><path d="M380 828 420 818 520 823 540 826 430 827zM1280 803 1370 790 1440 796 1330 803zM1060 815l30-3 10 6z"/><path d="M1695 852 1735 829 1725 842 1705 853z" fill="#dab4a8"/></g>
</g>
<g fill="#52576e" filter="url(#coast)">
<path d="M100 160 104 145 135 137 215 143 300 144 340 151 380 152 430 150 465 158 490 166 470 174 452 178 446 192 460 206 490 209 512 215 515 229 522 229 524 215 532 205 530 180 560 183 580 200 600 192 612 208 632 222 610 236 572 240 575 246 612 240 626 236 640 240 650 250 600 250 608 262 580 262 565 268 555 285 535 297 534 312 511 328 511 338 516 355 512 360 504 350 504 336 478 333 443 337 433 350 433 380 450 392 466 388 470 377 486 378 480 402 500 406 500 426 516 438 530 434 534 440 512 444 490 425 460 405 435 402 405 388 385 365 350 328 375 362 374 370 362 358 340 322 318 305 305 285 305 248 290 238 270 215 235 193 190 185 165 195 140 206 120 212 145 199 112 192 100 180 125 176 97 168 120 166z"/>
<path d="M528 436 555 424 575 428 605 430 620 448 655 458 665 480 720 497 737 515 718 545 714 575 705 588 672 600 668 620 650 642 630 650 628 665 590 680 588 698 577 703 585 715 572 735 585 747 565 749 545 738 541 715 550 690 558 640 566 570 540 550 525 515 514 505 520 480 533 460z"/>
<path d="M560 104 585 88 640 83 740 76 800 78 850 86 818 98 814 120 800 140 770 150 715 165 705 182 695 188 675 182 655 165 648 150 638 145 640 125 620 112z"/>
<path d="M438 95 480 83 520 79 600 80 590 88 555 95 540 110 500 108 470 98zM455 122 500 120 540 130 570 138 592 150 606 153 604 168 588 170 560 158 545 148 525 146 505 150 485 138zM300 124 345 118 395 126 370 133 350 142 310 134zM308 112l30-8 40 2-20 6zM405 130l18-8 15 8-10 10-15-2zM370 101l20-3 10 7-20 4zM410 96l30 2 2 8-25-1zM445 108l50 8 25 3-40 4z"/>
<path d="M34 148 62 153 78 162 68 168 34 165zM797 163l38-4 4 5-15 5-20 1zM880 198l16 6-6 12 20 14-4 6-22 1 8-12-10-10zM862 220l15-7-2 14-15 4z"/>
<path d="M865 268 900 269 899 252 890 247 915 238 945 222 950 205 965 203 945 197 934 190 933 180 955 172 970 155 990 143 1040 138 1078 142 1092 152 1104 153 1102 160 1075 154 1078 167 1120 160 1180 153 1222 146 1236 126 1258 130 1258 148 1268 130 1300 125 1350 112 1400 105 1450 108 1462 122 1530 125 1538 136 1590 131 1600 126 1640 133 1700 141 1782 145 1782 178 1740 183 1712 188 1695 196 1690 210 1674 230 1663 222 1664 206 1690 190 1670 190 1640 196 1605 215 1588 218 1590 237 1578 255 1560 268 1520 284 1532 308 1520 316 1508 290 1495 300 1478 290 1488 308 1496 330 1480 355 1440 375 1420 380 1434 410 1430 425 1418 435 1400 420 1390 415 1390 432 1408 460 1412 476 1396 463 1384 438 1384 410 1366 400 1350 371 1325 378 1292 408 1290 435 1280 440 1262 400 1258 374 1245 376 1230 360 1180 355 1165 365 1158 362 1140 333 1145 350 1160 364 1178 358 1193 372 1170 395 1120 418 1095 375 1075 346 1068 347 1118 425 1152 424 1140 450 1098 490 1096 520 1102 555 1077 575 1075 600 1060 615 1040 640 1000 648 990 625 977 600 963 565 972 540 965 510 950 490 953 463 930 458 920 450 865 457 840 435 823 412 828 372 860 340 862 325 880 308 955 300 958 318 1000 332 1010 322 1060 330 1077 325 1080 304 1040 304 1028 298 1035 283 1018 284 1018 302 1005 295 998 278 966 258 990 286 980 294 975 282 955 268 940 265 915 278 905 298 888 306 868 302 862 295z"/>
<path d="M1145 542 1148 558 1134 600 1120 602 1117 587 1132 565zM1292 436l9 8-5 8zM1370 455l17 8 33 27 0 16-14-6zM1418 510l36 4 22 8-50-5zM1434 475 1460 465 1475 447 1480 472 1465 497 1440 492zM1485 488l18-2-10 8 8 12-16-7zM1541 482 1560 496 1580 490 1610 502 1618 518 1630 530 1605 516 1592 524 1576 520 1574 508 1548 494zM1491 390l8 5-2 14 12 18 8 12-5 12-12-6 5-15-15-15zM1457 592 1500 578 1515 560 1535 545 1568 540 1565 552 1588 568 1592 560 1597 535 1612 570 1640 595 1649 618 1632 662 1600 668 1575 652 1560 638 1530 632 1500 642 1470 650 1465 620zM1610 680l12 1-5 10zM1747 651l22 14-12 15-4-12zM1748 680l-4 10-18 14-12-4zM1590 262l17 8-12 12-3 25-30 4-28 14 8-14 35-14 12-18zM1592 214l8 24-7-4zM965 98l25-6 40 2-35 12zM1160 133l25-17 55-8-40 14-25 13zM1350 87l65 12-45-4zM1560 114l50 0-10 8zM500 370l30 4 16 9-25-4zM548 386l22 3-14 3z"/>
</g>
<path d="M950 194l18 2-5 14-12-2zM1080 305l-2-3h-48v4z" fill="#2e3a8e"/>
<g fill="none" stroke="#7b9ad8" stroke-width="3" filter="url(#coast)"><path d="M300 125l22-4 30 4 18-8 30 6 10 14-10 8M398 140l18 6 24-4 2-20-30-6M440 98l22 14 18 22 40 8 20 16 30-4M300 130l20 8 60 8M490 182l20-28 25 4M1215 140l25-14M1255 145l10 10M1590 216l16-8"/><path d="M640 128l2 22-16 18-20 4" stroke="#5578c4"/></g>
<g fill="#e46a4e" filter="url(#coast)"><path d="M345 103h10v5h-10zM395 97h4v6h-4zM380 112h5v4h-5zM412 144h6v4h-6zM360 98h12v3h-12zM37 132h8v4h-8zM800 78l48 6-30-1zM813 95l6 2-4 20-4-4zM992 89h8v5h-8zM1455 90h20v4h-20zM1565 112l36 1v3l-36-1zM1585 124h6v6h-6zM1368 106h10v4h-10zM1310 119h12v4h-12zM508 78h10v3h-10zM280 834l34-1-10 4-24 1zM125 855l50-4-10 4-40 3zM180 849l24-3v3l-24 2zM614 798h4v14h-4zM613 822h5v14h-5zM660 846h22l4 4h-22zM905 813l12 3v3zM1290 799l24-1-10 4h-14zM1368 794h12v3h-12zM1625 111l12 1v4h-8z"/></g>
<g fill="#d3a99b" filter="url(#coast)"><path d="M325 107h12v4h-12zM405 102h12v3h-12zM430 96l6 4-4 4zM807 122h4v12h-4zM1340 106h20v3h-20zM1475 92l24 6-24-2zM1628 134h30v3h-30zM1700 140h24v3h-24zM110 857h20v3h-20zM420 825h24v3h-24zM630 843l30 4v3l-30-4zM680 850h30v4h-30zM975 815h20v3h-20z"/></g>
</g>
<rect x="1480" y="650" width="16" height="211" fill="url(#cw)"/>
<path d="M1492 650.500h12M1492 686.500h12M1492 721.500h12M1492 756.500h12M1492 791.500h12M1492 826.500h12M1492 861.500h12" stroke="#fff"/>
<g class="ticks"><text x="1510" y="654" textLength="60">3.0e+00</text><text x="1510" y="690" textLength="22">2.5</text><text x="1509" y="725">2</text><text x="1510" y="760" textLength="22">1.5</text><text x="1510" y="795">1</text><text x="1510" y="830" textLength="22">0.5</text><text x="1510" y="865" textLength="60">0.0e+00</text><text transform="translate(1587 761) rotate(-90)">hi</text></g>
<path d="M548.500 790V755" stroke="#d8d820" stroke-width="1.200"/><path d="M545 755.500l3.500-8.500 3.500 8.500z" fill="#e8e81c"/><path d="M545 755.500h7" stroke="#222"/><path d="M552 791.500h33" stroke="#d81c1c" stroke-width="1.200"/><path d="M585 788l9 3.500-9 3.500z" fill="#f01010"/><path d="M585 788v7" stroke="#300" stroke-width="1.500"/><circle cx="548.500" cy="791.500" r="4" fill="#006400"/>
<g class="axl"><text x="550" y="755">Y</text><text x="551" y="791">Z</text><text x="586" y="791">X</text></g>
</svg>
</div>
</div>
</section>
</main>
<footer class="status"><div class="btn abort"><svg width="10" height="10" viewBox="0 0 10 10"><path d="M1.500 1.500l7 7m0-7l-7 7" stroke="#aaa" stroke-width="3.200"/></svg></div><div class="prog"></div></footer>
</div>
</body>
</html>
```
FILE: styles.css
```css
* { box-sizing: border-box; }
body { margin: 0; width: 1602px; height: 902px; overflow: hidden; background: #efefef; color: #000; font: 14.5px/20px "Noto Sans", "Open Sans", sans-serif; letter-spacing: 0.02px; white-space: nowrap; }
svg { display: block; flex: none; }
.defs { position: absolute; }
.window { width: 1602px; height: 902px; border: 1px solid #c3c3c3; display: flex; flex-direction: column; }

.titlebar { height: 37px; flex: none; background: #323031; border-bottom: 1px solid #222; display: grid; grid-template-columns: 1fr auto 1fr; align-items: center; color: #eee; font-size: 13.5px; font-weight: 600; }
.title { padding-top: 1px; letter-spacing: -0.25px; }
.wm { width: 90px; height: 36px; justify-self: end; }
.menubar { height: 22px; flex: none; border-bottom: 1px solid #cfcfcf; display: flex; padding-left: 10px; gap: 14.5px; line-height: 21px; letter-spacing: 0.17px; }
.menubar u { text-underline-offset: 3px; text-decoration-thickness: 1px; text-decoration-skip-ink: none; }

.toolbar { height: 39px; flex: none; display: flex; align-items: center; border-bottom: 1px solid #b4b4b4; background: linear-gradient(#fafafa, #ececec); }
.t3 { height: 38px; }
.i { width: 32px; height: 32px; }
.i.w { width: 33px; }
.i.on { background: #dadada; border: 1px solid #a9a9a9; border-radius: 3px; }
.handle { flex: none; width: 17px; height: 18px; display: flex; padding-left: 9px; }
.handle::before { content: ""; width: 5px; height: 18px; background-image: conic-gradient(#bdbdbd 90deg, transparent 0); background-size: 3px 3px; background-position: -1px 1px; opacity: .75; }
.handle.first { margin-left: -4px; }
.handle.h3 { width: 16px; }
.sep { flex: none; width: 6px; height: 20px; display: flex; justify-content: center; }
.sep::before { content: ""; width: 1px; background: #d0d0d0; }
.timelabel { width: 40px; font-size: 15px; letter-spacing: -.25px; flex: none; }
.field { background: #fff; border: 1px solid #aaa; border-radius: 3px; height: 25px; line-height: 23px; padding-left: 3px; }
.field.time { width: 142px; margin-right: 2px; }
.spin { width: 40px; height: 24px; border: 1px solid #b4b4b4; border-radius: 3px; display: flex; color: #bbb; line-height: 22px; }
.spin span { width: 25px; border-right: 1px solid #b4b4b4; padding-left: 5px; }
.combo { height: 26px; border: 1px solid #a9a9a9; border-radius: 3px; background: linear-gradient(#fdfdfd, #ebebeb); display: flex; align-items: center; padding: 0 7px 0 4px; gap: 4px; flex: none; }
.combo.dis { border-color: #c4c4c4; color: #bcbcbc; }
.arr { margin-left: auto; border: 4px solid transparent; border-top: 4px solid #555; border-bottom: 0; }
.dis .arr { border-top-color: #ccc; }
.arr.up { border-top: 0; border-bottom: 4px solid #555; margin: 0; }
.c1 { width: 222px; margin-right: 4px; }
.c1 svg { margin-left: 1px; }
.c2 { width: 86px; }
.c3 { width: 150px; letter-spacing: -.1px; }
.mark { font: italic 900 17px "Liberation Sans", sans-serif; }
.ax { font: 700 11px Roboto, sans-serif; fill: #858585; letter-spacing: 0; }
.deg { font: 500 10px Roboto, sans-serif; fill: #777; letter-spacing: 0; }
.q { font: 700 10px Roboto, sans-serif; fill: #5e6350; }

.main { flex: 1; display: flex; min-height: 0; }
.left { width: 456px; display: flex; flex-direction: column; }
.dock { height: 20px; flex: none; display: flex; justify-content: space-between; align-items: center; padding: 0 2px 0 4px; letter-spacing: -.25px; }
.tree { height: 220px; flex: none; border: 1px solid #b4b4b4; background: #fff; letter-spacing: -.1px; }
.trow { height: 22px; display: flex; align-items: center; padding-left: 3px; }
.trow:first-child { height: 23px; }
.trow:first-child svg { margin-top: -1px; }
.teye { width: 16px; height: 12px; }
.node { margin-left: 38px; height: 18px; display: flex; align-items: center; gap: 3px; padding: 0 4px 0 1px; }
.node.sel { background: #308cc6; color: #e8f2f8; line-height: 18px; }
.hsplit { height: 6px; flex: none; width: 18px; margin-left: 221px; background: radial-gradient(circle at 1px 2px, #c4c4c4 .7px, transparent 1px) 0 0/3px 6px; }
.tabs { height: 28px; flex: none; display: flex; align-items: flex-end; border-bottom: 1px solid #b4b4b4; letter-spacing: -.1px; }
.tab { height: 26px; width: 105px; border: 1px solid #b4b4b4; border-left: 0; border-bottom: 0; background: #dcdcdc; text-align: center; line-height: 26px; border-radius: 0 3px 0 0; }
.tab.act { width: 97px; background: linear-gradient(#fbfbfb, #efefef); border-left: 1px solid #b4b4b4; border-radius: 3px 3px 0 0; margin-bottom: -1px; height: 29px; line-height: 28px; }
.d2 { height: 21px; margin-bottom: 2px; }
.btns { display: flex; gap: 2px; padding: 6px 0 0 9px; }
.btn { flex: none; border: 1px solid #a9a9a9; border-radius: 3px; background: linear-gradient(#fefefe, #ebebeb); display: flex; align-items: center; justify-content: center; gap: 2px; }
.btns .btn { width: 108px; height: 25px; letter-spacing: -.2px; padding-bottom: 1px; }
.btn.dis { border-color: #c4c4c4; color: #bcbcbc; }
.btns .del { letter-spacing: .05px; }
.gray { filter: grayscale(1); opacity: .6; }
.help { color: #3d94d0; font-weight: 700; font-size: 17px; }
.search { display: flex; gap: 2px; padding: 6px 0 0 9px; }
.search .field { width: 412px; color: #7e7e7e; letter-spacing: 0; padding-left: 2px; }
.search .gear { width: 24px; height: 24px; }
.scroll { display: flex; height: 327px; margin: 6px 0 0 9px; flex: none; }
.props { width: 424px; overflow: hidden; }
.ghead { display: flex; gap: 4px; align-items: center; height: 27px; }
.gtitle { width: 296px; height: 27px; border: 1px solid #b4b4b4; background: #eaeaea; font-weight: 700; display: flex; align-items: center; padding: 0 0 2px 10px; letter-spacing: -.05px; }
.minus { width: 14px; height: 6px; border: 1px solid #20306c; background: #7c9be0; margin-right: 7px; }
.btn.sq { width: 28px; height: 25px; margin-top: -1px; }
.btn.off { border-color: #c4c4c4; }
.row { display: flex; }
.row .lab { width: 108px; line-height: 16px; }
.row .combo { width: 316px; height: 25px; padding-bottom: 1px; }
.dim { margin-top: 6px; }
.dim .lab { letter-spacing: .1px; }
.dim .combo { letter-spacing: .02px; }
.proj .lab { letter-spacing: .12px; }
.proj .combo { letter-spacing: .06px; }
.box { margin-top: 4px; border: 1px solid #b4b4b4; background: #fff; height: 43px; }
.box.cell { height: 99px; }
.bh { height: 21px; border-bottom: 1px solid #b4b4b4; background: linear-gradient(#fcfcfc, #ebebeb); display: flex; align-items: center; padding: 0 1px 0 3px; }
.bh span { margin-left: 5px; flex: 1; line-height: 20px; }
.cb { flex: none; width: 14px; height: 14px; background: #fff; border: 1px solid #b8b8b8; display: flex; }
.cb.ck::before { content: ""; width: 4px; height: 8px; border: solid #111; border-width: 0 2px 2px 0; transform: rotate(35deg); margin: 1px 0 0 3px; }
.item { display: flex; align-items: center; height: 19px; padding: 0 0 2px 3px; gap: 6px; letter-spacing: -.2px; }
.item span { margin-left: 1px; }
.item svg { margin-left: -1px; margin-right: 1px; }
.proj { margin-top: 4px; }
.check { display: flex; align-items: center; gap: 5px; height: 27px; padding-bottom: 1px; }
.proj + .check { margin-top: 2px; letter-spacing: .06px; }
.check:last-child { letter-spacing: -.04px; }
.sbar { width: 14px; border-left: 1px solid #b4b4b4; display: flex; flex-direction: column; }
.sb { height: 14px; display: flex; align-items: center; justify-content: center; background: #fafafa; }
.sb:first-child { border-bottom: 1px solid #b4b4b4; }
.sb:last-child { border-top: 1px solid #b4b4b4; }
.sb .arr { margin: 0; }
.thumb { height: 94px; background: linear-gradient(90deg, #fbfbfb, #efefef); border-bottom: 1px solid #b4b4b4; }
.trough { flex: 1; background: #e2e2e2; }
.vsplit { width: 6px; display: flex; padding-top: 344px; }
.vsplit i { width: 3px; height: 18px; margin-left: 2px; background: radial-gradient(circle at 1.5px 1.5px, #bbb .7px, transparent 1px) 0 0/3px 3px; }

.right { flex: 1; display: flex; flex-direction: column; }
.ltabs { height: 29px; flex: none; display: flex; align-items: flex-end; border-bottom: 1px solid #b4b4b4; }
.ltab { display: flex; align-items: center; justify-content: center; border: 1px solid #b4b4b4; border-bottom: 0; border-radius: 3px 3px 0 0; }
.ltab.act { width: 129px; height: 28px; margin-bottom: -1px; background: linear-gradient(#fefefe, #f6f6f6); gap: 4px; padding: 0 1px 1px 0; }
.ltab.plus { width: 32px; height: 25px; border-left: 0; background: #e6e6e6; }
.frame { flex: 1; border: solid #c0c0c0; border-width: 0 0 1px 1px; padding: 0 1px 0 1px; display: flex; flex-direction: column; }
.vbar { height: 22px; flex: none; display: flex; align-items: center; padding: 0 2px 2px 0; }
.s { width: 20px; height: 20px; }
.vs { width: 1px; height: 8px; margin: 0 2.500px 0 3px; background: #d0d0d0; }
.vs.v3, .vs.v4 { margin: 0 2px 0 3px; }
.twod { width: 19px; text-align: center; font: 400 11px "Noto Sans", sans-serif; color: #222; margin-top: -2px; }
.rv { margin-left: auto; margin-right: 11px; font-weight: 700; text-decoration: underline; text-underline-offset: 3px; letter-spacing: .05px; }
.vb { width: 19px; height: 19px; margin-right: 2px; border: 1px solid #b4b4b4; border-radius: 3px; background: linear-gradient(#fff, #eee); display: flex; align-items: center; justify-content: center; }
.vb:last-child { margin-right: 0; }
.canvas { width: 1134px; height: 648px; border: 2px solid #0000f4; background: #52576e; box-shadow: inset 0 0 0 1px #fff; }
.scene { width: 1128px; height: 642px; margin: 1px; }
.ticks { font: 17px Lato, sans-serif; fill: #f4f4f4; letter-spacing: 0; }
.axl { font: 12.500px "Liberation Sans", sans-serif; fill: #f0f0f0; }

.status { height: 25px; flex: none; display: flex; padding: 3px 2px 2px 801px; gap: 2px; }
.abort { width: 20px; height: 19px; border-color: #c0c0c0; }
.prog { flex: 1; height: 19px; border: 1px solid #fff; border-top-color: #9c9c9c; border-left-color: #9c9c9c; }
```
